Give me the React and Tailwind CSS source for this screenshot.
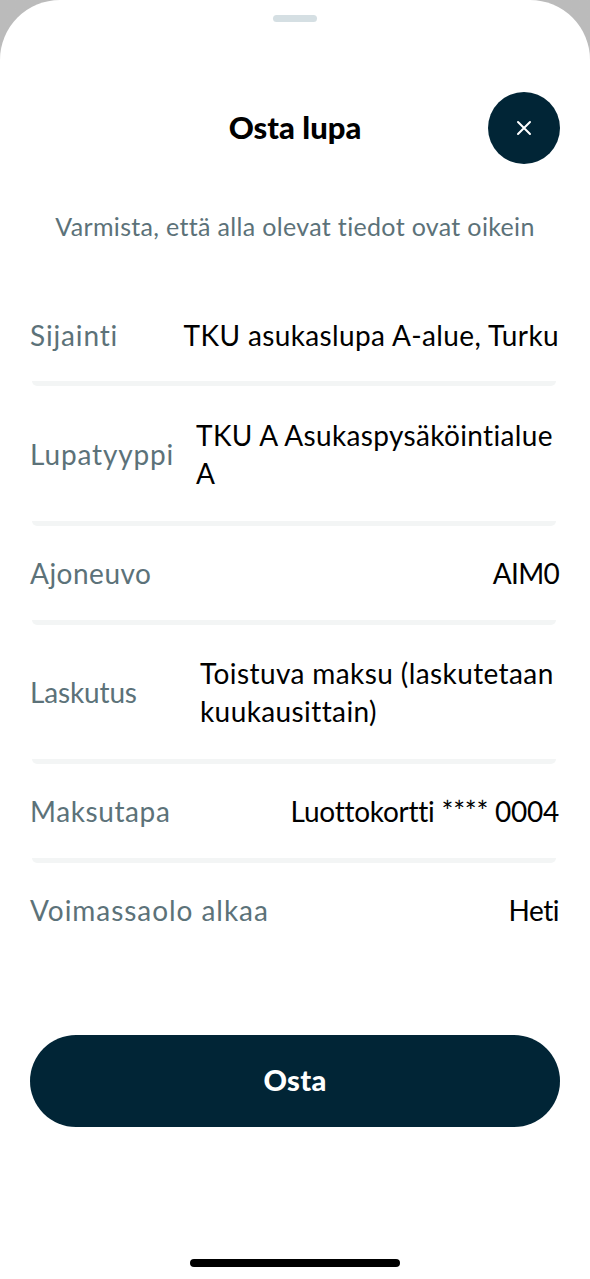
const font = { fontFamily: '"Lato", "Open Sans", sans-serif' };

const rows = [
  { label: "Sijainti", value: "TKU asukaslupa A-alue, Turku", h: "h-[90px] pb-[2px]", lt: "tracking-[0.85px]", vt: "tracking-[0.37px]" },
  { label: "Lupatyyppi", value: "TKU A Asukaspysäköintialue A", h: "h-[135px]", wrap: "w-[363px]", lt: "tracking-[0.85px]", vt: "tracking-[0.35px]" },
  { label: "Ajoneuvo", value: "AIM0", h: "h-[94px]", lt: "tracking-[0.5px]", vt: "tracking-[-0.7px]" },
  { label: "Laskutus", value: "Toistuva maksu (laskutetaan kuukausittain)", h: "h-[134px]", wrap: "w-[359px]", lt: "tracking-[-0.15px]", vt: "tracking-[0.4px]" },
  { label: "Maksutapa", value: "Luottokortti **** 0004", h: "h-[94px]", lt: "tracking-[0.6px]", vt: "tracking-[-0.25px]" },
];

function Row({ label, value, h, wrap, lt, vt }) {
  return (
    <div className={`${h} flex flex-col justify-center`}>
      <div className="flex items-center justify-between">
        <span className={`text-[28px] leading-[38px] text-[#5c7279] ${lt}`}>{label}</span>
        <span className={`text-[28px] leading-[38px] text-black ${vt} ${wrap ?? ""}`}>{value}</span>
      </div>
    </div>
  );
}

export default function App() {
  return (
    <div className="w-[590px] h-[1279px] bg-white overflow-hidden" style={font}>
      <div className="bg-gradient-to-b from-[#bbbbbb] from-50% to-white h-[90px] -mb-[90px]" />
      <div className="relative bg-white h-full rounded-t-[60px] flex flex-col px-[30px]">
        <div className="mx-auto mt-[15px] w-[44px] h-[7px] rounded-full bg-[#d5dfe3]" />
        <div className="relative mt-[70px] h-[72px] flex items-center justify-center">
          <h1 className="text-[31px] font-black text-black pb-[2px]">Osta lupa</h1>
          <button className="absolute right-0 top-0 w-[72px] h-[72px] rounded-full bg-[#012536] flex items-center justify-center">
            <svg width="16" height="16" viewBox="0 0 16 16" fill="none" stroke="white" strokeWidth="2" strokeLinecap="round">
              <path d="M2 2l12 12M14 2L2 14" />
            </svg>
          </button>
        </div>
        <p className="mt-[45px] text-center text-[25px] leading-[34px] tracking-[0.33px] text-[#5c7279]">
          Varmista, että alla olevat tiedot ovat oikein
        </p>
        <div className="mt-[48px] flex flex-col pr-[1px]">
          {rows.map((r) => (
            <div key={r.label} className="contents">
              <Row {...r} />
              <div className="h-[5px] ml-[2px] mr-[3px] rounded-b-[6px] bg-[#f3f5f5]" />
            </div>
          ))}
          <div className="flex items-center justify-between pt-[28px]">
            <span className="text-[28px] leading-[38px] tracking-[0.95px] text-[#5c7279]">Voimassaolo alkaa</span>
            <span className="text-[28px] leading-[38px] tracking-[-0.5px] text-black">Heti</span>
          </div>
        </div>
        <button className="mt-[106px] h-[92px] pb-[2px] rounded-[46px] bg-[#012536] text-white text-[29px] font-black tracking-[0.3px]">
          Osta
        </button>
        <div className="absolute bottom-[12px] left-[190px] w-[210px] h-[8px] rounded-full bg-black" />
      </div>
    </div>
  );
}
